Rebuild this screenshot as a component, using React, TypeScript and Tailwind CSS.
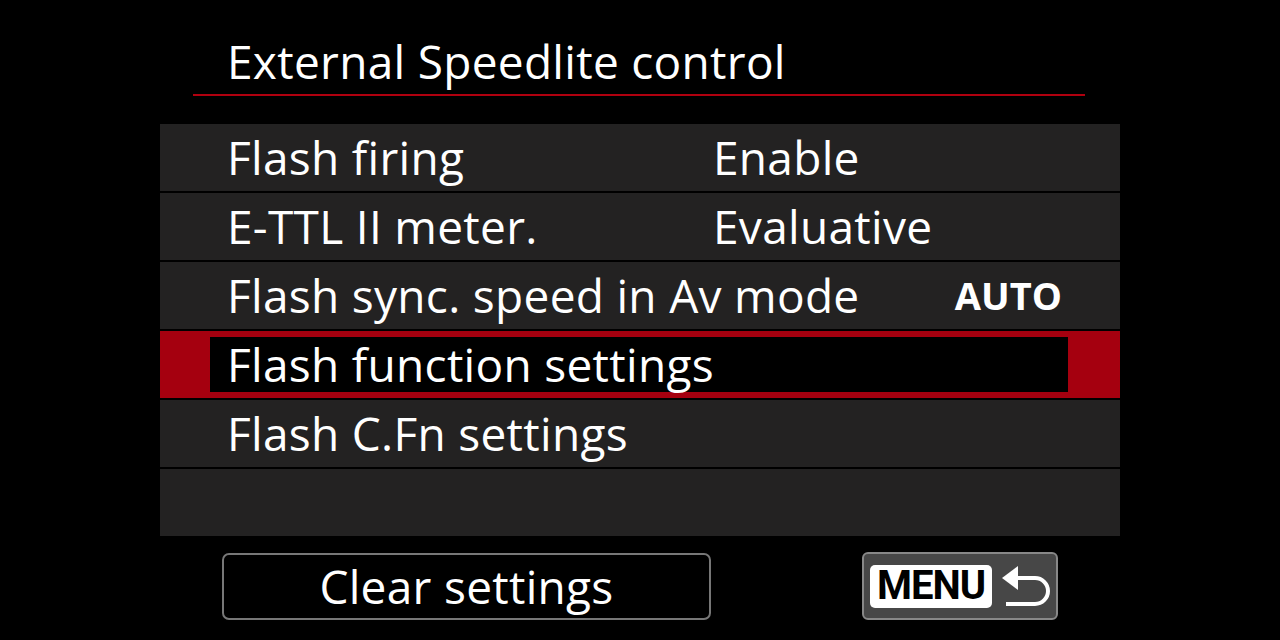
const ROWS = [
  { label: 'Flash firing', value: 'Enable' },
  { label: 'E-TTL II meter.', value: 'Evaluative' },
  { label: 'Flash sync. speed in Av mode', value: 'AUTO', bold: true },
  { label: 'Flash function settings', selected: true },
  { label: 'Flash C.Fn settings' },
  { label: '' },
]

function ReturnArrow() {
  return (
    <svg width="50" height="42" viewBox="0 0 50 42" fill="none">
      <path d="M1 13 L17 1 L17 25 Z" fill="white" />
      <path d="M16 13 H34 A13 13 0 0 1 34 39 H5" stroke="white" strokeWidth="4" fill="none" />
    </svg>
  )
}

export default function App() {
  return (
    <div
      className="w-[1280px] h-[640px] bg-black text-white overflow-hidden flex flex-col whitespace-nowrap tracking-[0.3px]"
      style={{ fontFamily: '"Open Sans", "Noto Sans", sans-serif' }}
    >
      {/* Title */}
      <div className="h-[124px] flex flex-col">
        <div className="pl-[227px] pt-[28px] h-[94px] text-[46px] leading-[66px] text-white">
          External Speedlite control
        </div>
        <div className="ml-[193px] w-[892px] h-[2px] bg-[#b0000f]" />
      </div>

      {/* Menu rows */}
      <div className="ml-[160px] w-[960px] flex flex-col gap-[2px]">
        {ROWS.map((row, i) =>
          row.selected ? (
            <div key={i} className="h-[67px] bg-[#a5000f] pl-[50px] pr-[52px] py-[6px]">
              <div className="h-full bg-black flex items-center pl-[17px] text-[46px]">
                {row.label}
              </div>
            </div>
          ) : (
            <div key={i} className="h-[67px] bg-[#232222] flex items-center pl-[67px] text-[46px]">
              <span className="w-[486px] shrink-0">{row.label}</span>
              {row.value &&
                (row.bold ? (
                  <span className="ml-auto mr-[58px] font-bold text-[38px] tracking-normal">{row.value}</span>
                ) : (
                  <span>{row.value}</span>
                ))}
            </div>
          )
        )}
      </div>

      {/* Bottom buttons */}
      <div className="flex items-center mt-[16px] pl-[222px]">
        <div className="w-[489px] h-[67px] border-2 border-[#777] rounded-[7px] flex items-center justify-center text-[46px]">
          Clear settings
        </div>
        <div className="ml-[151px] w-[196px] h-[68px] bg-[#474747] border-2 border-[#888] rounded-[6px] flex items-center pl-[6px] gap-[9px]">
          <div
            className="w-[122px] h-[43px] bg-white rounded-[5px] flex items-center justify-center text-black font-bold text-[40px] leading-none tracking-[-1px]"
            style={{ fontFamily: 'Roboto, "Liberation Sans", sans-serif' }}
          >
            MENU
          </div>
          <ReturnArrow />
        </div>
      </div>
    </div>
  )
}
